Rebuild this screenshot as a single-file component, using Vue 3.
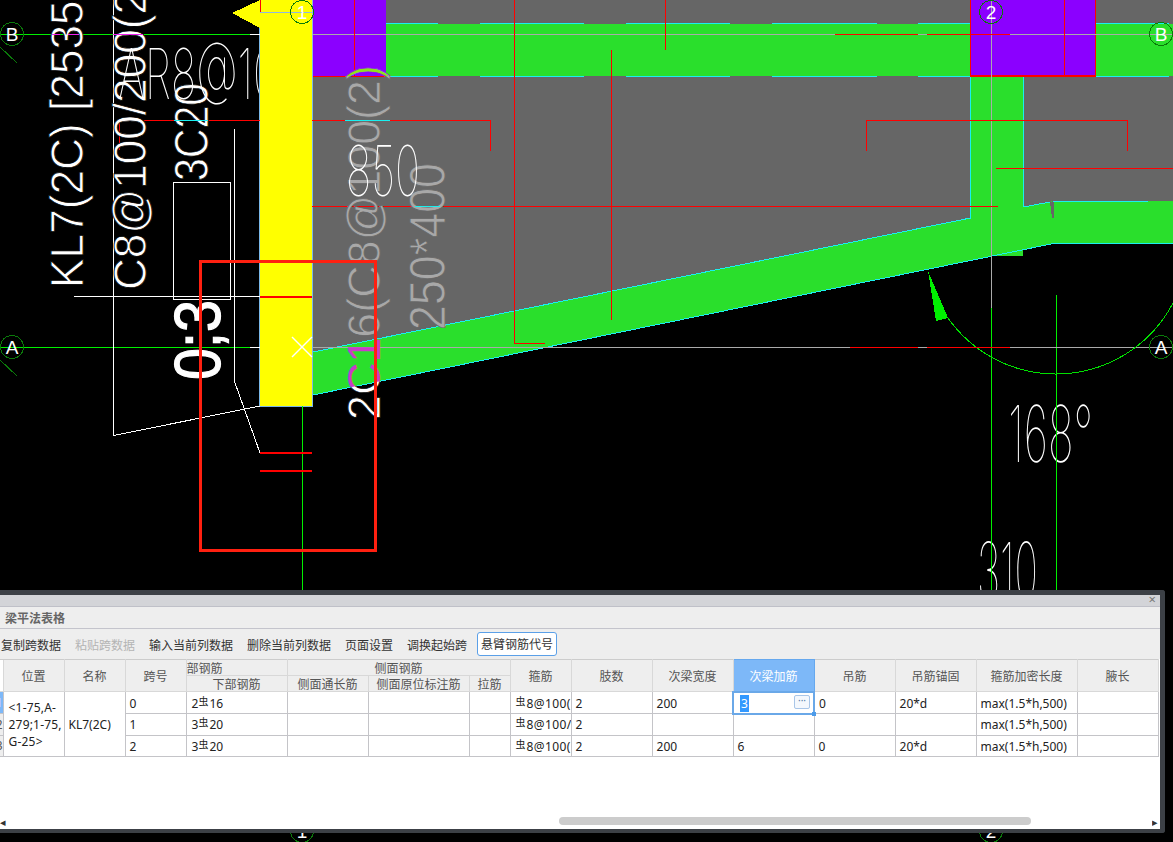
<template>
  <div class="page">
    <svg class="cad" width="1173" height="842" viewBox="0 0 1173 842">
      <defs>
        <clipPath id="on-gray"><polygon points="313,76 970,76 970,218 313,352" /></clipPath>
        <clipPath id="on-green"><polygon points="313,352 970,218 970,300 313,395" /></clipPath>
        <clipPath id="on-black"><polygon points="260,406 313,395 1000,254 1000,600 260,600" /></clipPath>
        <clipPath id="on-top"><rect x="313" y="0" width="90" height="76" /></clipPath>
        <clipPath id="left-of-column"><rect x="0" y="0" width="259" height="590" /></clipPath>
      </defs>

      <!-- slabs and beams -->
      <rect x="386" y="0" width="584" height="24" fill="#666" />
      <rect x="1096" y="0" width="77" height="24" fill="#666" />
      <polygon points="313,76 970,76 970,218 313,352" fill="#666" />
      <polygon points="1023,76 1173,76 1173,201 1053,201 1023,207" fill="#666" />
      <rect x="386" y="24" width="584" height="52" fill="#2adf2c" />
      <rect x="1096" y="24" width="77" height="52" fill="#2adf2c" />
      <polygon points="971,76 1023,76 1023,207 1053,201 1173,201 1173,243 1056,243 1023,250 1023,256 992,256 313,395 313,352 971,218" fill="#2adf2c" />
      <polygon points="1050,202 1054,201 1054,218 1052,218" fill="#666" />

      <!-- cyan edges -->
      <g stroke="#19f0f0" fill="none">
        <path v-for="y in [23.5, 76.5]" :key="y" :d="`M386 ${y}H438M480 ${y}H584M626 ${y}H730M772 ${y}H877M918 ${y}H970M1096 ${y}H1169`" />
        <path d="M970.5 76V218L313 352M1023.5 76V207L1050 202M1053 201H1148M313 395L1056 243H1173M312.5 76V352" />
      </g>

      <text class="stick" transform="translate(1008 462)" font-size="78" textLength="85" lengthAdjust="spacingAndGlyphs">168°</text>
      <text class="stick" transform="translate(977 600)" font-size="80" textLength="61" lengthAdjust="spacingAndGlyphs">310</text>

      <!-- column and purple blocks -->
      <rect x="313" y="0" width="73" height="76" fill="#8b00ff" />
      <rect x="970.5" y="-2" width="125" height="78" fill="#8b00ff" stroke="#f00" stroke-width="1.5" />
      <rect x="259.5" y="-2" width="53" height="408" fill="#ff0" stroke="#7ab8e8" />
      <polygon points="232,13 260,0 260,28" fill="#ff0" />
      <path d="M260 12.5H312M312.5 0V60" stroke="#8fb8e0" fill="none" />

      <!-- axes -->
      <g fill="none">
        <path d="M0 34.5H250M0 347.5H250M302.5 406V590M1056.5 295V590M991.5 308V590" stroke="#00f000" />
        <path d="M250 34.5H260M250 347.5H260" stroke="#fff" />
        <path d="M313 34.5H1173M313 347.5H1173M991.5 0V308" stroke="#aaa" />
        <path d="M948 318A132 132 0 0 0 1173 303" stroke="#00e000" />
        <path d="M0 47L17 63M0 360L17 376" stroke="#0a7a0a" />
      </g>
      <polygon points="928,271 936,321 948,318" fill="#00f000" />

      <!-- red rebar lines -->
      <g stroke="#f00" fill="none">
        <path d="M119.5 150V120.5H260M312 120.5H490.5V151M312 206.5H998" />
        <path d="M260 297H312M260 453H312M260 471H312" stroke-width="2" />
        <path d="M354.5 0V76M313 76.5H386M260.5 0V12M514.5 0V343.5H545M665.5 0V50M611.5 50V320" />
        <path d="M835 34.5H918M927 34.5H1010M850 347.5H918M927 347.5H1010M1064.5 0V76" />
        <path d="M866.5 151V120.5H1127.5V151M996 168.5H1173" />
      </g>

      <!-- white outline -->
      <g stroke="#fff" fill="none">
        <path d="M113.5 0V435.5L260 406M74 296.5H260M234 129V380L260 453" />
        <rect x="173" y="182.5" width="57.5" height="117" />
      </g>
      <g class="cross" stroke="#fff" stroke-width="1.4">
        <line x1="292" y1="337" x2="312" y2="357" />
        <line x1="292" y1="357" x2="312" y2="337" />
      </g>

      <!-- rotated labels -->
      <text class="label" fill="#fff" stroke="#000" transform="translate(83 288) rotate(-90)" font-size="46" textLength="300" lengthAdjust="spacingAndGlyphs">KL7(2C) [2535]</text>
      <text class="label" fill="#fff" stroke="#000" transform="translate(146 290) rotate(-90)" font-size="46" textLength="300" lengthAdjust="spacingAndGlyphs">C8@100/200(2</text>
      <text class="label" fill="#fff" stroke="#000" transform="translate(208 181) rotate(-90)" font-size="48" textLength="98" lengthAdjust="spacingAndGlyphs">3C20</text>
      <text class="heavy" fill="#fff" stroke="#fff" transform="translate(220 380) rotate(-90)" font-size="64" textLength="80" lengthAdjust="spacingAndGlyphs">0;3</text>
      <g v-for="layer in stirrupLayers" :key="layer.clip" :clip-path="`url(#${layer.clip})`">
        <text class="label" :fill="layer.fill" :stroke="layer.edge" transform="translate(380 420) rotate(-90)" font-size="46" textLength="355" lengthAdjust="spacingAndGlyphs">2C16(C8@100(2)</text>
      </g>
      <text class="label" fill="#a8a8a8" stroke="#666" transform="translate(445 330) rotate(-90)" font-size="50" textLength="167" lengthAdjust="spacingAndGlyphs">250*400</text>
      <path d="M52 34.5H60M68 34.5H79M113 34.5H143" stroke="#f020f0" />
      <path d="M174 120.5H208M345 120.5H390M415 206.5H440" stroke="#19f0f0" />

      <!-- thin stick font sits over the wide labels -->
      <g clip-path="url(#left-of-column)">
        <text class="stick" transform="translate(118 99)" font-size="70" textLength="160" lengthAdjust="spacingAndGlyphs">AR8@10</text>
      </g>
      <text class="stick" transform="translate(346 196)" font-size="70" textLength="74" lengthAdjust="spacingAndGlyphs">850</text>

      <!-- selection box -->
      <rect x="200.5" y="261.5" width="175" height="288.5" fill="none" stroke="#ff2010" stroke-width="3" />

      <!-- axis bubbles -->
      <g v-for="b in bubbles" :key="b.label + b.x + b.y">
        <circle :cx="b.x" :cy="b.y" r="11.5" fill="none" stroke="#0a7a0a" />
        <text class="bubble" :x="b.x" :y="b.y + 7" text-anchor="middle">{{ b.label }}</text>
      </g>
    </svg>

    <section class="panel">
      <div class="caption"><span class="close">×</span></div>
      <div class="title">梁平法表格</div>
      <div class="toolbar">
        <span v-for="t in tools" :key="t.text" class="tool" :class="{ off: t.off, on: t.on }">{{ t.text }}</span>
      </div>

      <div class="grid-wrap">
        <table class="grid">
          <colgroup>
            <col v-for="(w, i) in widths" :key="i" :style="{ width: w + 'px' }" />
          </colgroup>
          <thead>
            <tr class="h1">
              <th rowspan="2" class="head-stub"></th>
              <th rowspan="2">位置</th>
              <th rowspan="2">名称</th>
              <th rowspan="2">跨号</th>
              <th class="cut">部钢筋</th>
              <th colspan="3">侧面钢筋</th>
              <th rowspan="2">箍筋</th>
              <th rowspan="2">肢数</th>
              <th rowspan="2">次梁宽度</th>
              <th rowspan="2" class="picked">次梁加筋</th>
              <th rowspan="2">吊筋</th>
              <th rowspan="2">吊筋锚固</th>
              <th rowspan="2">箍筋加密长度</th>
              <th rowspan="2">腋长</th>
            </tr>
            <tr class="h2">
              <th>下部钢筋</th>
              <th>侧面通长筋</th>
              <th>侧面原位标注筋</th>
              <th>拉筋</th>
            </tr>
          </thead>
          <tbody>
            <tr v-for="(r, i) in rows" :key="r.span">
              <td class="stub" :class="{ now: i === 0 }">{{ i + 1 }}</td>
              <td v-if="i === 0" rowspan="3" class="place">&lt;1-75,A-<br />279;1-75,<br />G-25&gt;</td>
              <td v-if="i === 0" rowspan="3">KL7(2C)</td>
              <td>{{ r.span }}</td>
              <td class="bars">{{ r.bars }}<span class="rebar">虫</span>{{ r.size }}</td>
              <td></td>
              <td></td>
              <td></td>
              <td class="clip"><span class="rebar">虫</span>{{ r.stirrup }}</td>
              <td>2</td>
              <td>{{ r.width }}</td>
              <td v-if="i === 0" class="editing">
                <span class="sel">3</span>
                <span class="more">···</span>
                <i class="handle"></i>
              </td>
              <td v-else>{{ r.add }}</td>
              <td>{{ r.hang }}</td>
              <td>{{ r.anchor }}</td>
              <td>max(1.5*h,500)</td>
              <td></td>
            </tr>
          </tbody>
        </table>
      </div>

      <div class="scroller">
        <span class="arrow">◂</span>
        <div class="track"><div class="thumb"></div></div>
        <span class="arrow">▸</span>
      </div>
    </section>
  </div>
</template>

<script setup>
const stirrupLayers = [
  { clip: 'on-gray', fill: '#a8a8a8', edge: '#666' },
  { clip: 'on-green', fill: '#c83cc8', edge: 'none' },
  { clip: 'on-black', fill: '#ffffff', edge: '#000' },
  { clip: 'on-top', fill: '#8ee01f', edge: '#8b00ff' }
]

const bubbles = [
  { label: 'B', x: 12, y: 34 },
  { label: 'B', x: 1161, y: 34 },
  { label: 'A', x: 12, y: 347 },
  { label: 'A', x: 1161, y: 347 },
  { label: '1', x: 302, y: 12 },
  { label: '2', x: 991, y: 12 },
  { label: '1', x: 302, y: 831 },
  { label: '2', x: 991, y: 831 }
]

const tools = [
  { text: '复制跨数据' },
  { text: '粘贴跨数据', off: true },
  { text: '输入当前列数据' },
  { text: '删除当前列数据' },
  { text: '页面设置' },
  { text: '调换起始跨' },
  { text: '悬臂钢筋代号', on: true }
]

const widths = [4, 61, 61, 61, 101, 81, 101, 41, 61, 81, 81, 81, 81, 81, 101, 81]

const rows = [
  { span: 0, bars: 2, size: 16, stirrup: '8@100(', width: 200, add: '3', hang: 0, anchor: '20*d' },
  { span: 1, bars: 3, size: 20, stirrup: '8@100/', width: '', add: '', hang: '', anchor: '' },
  { span: 2, bars: 3, size: 20, stirrup: '8@100(', width: 200, add: '6', hang: 0, anchor: '20*d' }
]
</script>

<style>
html, body { background: #000; overflow: hidden; }
</style>

<style scoped>
.page { position: relative; width: 1173px; height: 842px; overflow: hidden; background: #000; }
.cad { display: block; shape-rendering: crispEdges; }
.label { font-family: "Liberation Sans", sans-serif; stroke-width: 0.8px; }
.heavy { font-family: "Liberation Sans", sans-serif; stroke-width: 1.2px; }
.stick { font-family: Inter, "Liberation Sans", sans-serif; font-weight: 100; fill: #fff; }
.cross { shape-rendering: auto; }
.bubble { font-family: "Liberation Sans", sans-serif; font-size: 19px; fill: #fff; }

.panel {
  position: absolute;
  left: 0;
  top: 590px;
  width: 1160px;
  height: 234px;
  display: flex;
  flex-direction: column;
  background: #fff;
  border: solid #3c4046;
  border-width: 5px 5px 4px 0;
  border-radius: 0 3px 3px 0;
  font-family: "Noto Sans", "Noto Sans CJK SC", sans-serif;
  font-size: 12px;
  color: #222;
}
.caption { height: 11px; flex: none; background: #d3d4d8; border-bottom: 1px solid #bfc0c8; position: relative; }
.close { position: absolute; right: 4px; top: -3px; font-size: 13px; line-height: 14px; color: #777; }
.title {
  height: 21px;
  flex: none;
  padding-left: 5px;
  line-height: 21px;
  background: #eee;
  border-bottom: 1px solid #c4c4cc;
  font-family: "Noto Sans CJK SC", sans-serif;
  font-weight: 700;
  color: #666;
}
.toolbar {
  height: 30px;
  flex: none;
  display: flex;
  align-items: center;
  gap: 14px;
  padding-left: 1px;
  background: #eee;
  font-family: "Noto Sans CJK SC", sans-serif;
  color: #333;
  white-space: nowrap;
}
.tool.off { color: #b4b4b4; }
.tool.on {
  margin-left: -4px;
  padding: 0 3px;
  height: 22px;
  line-height: 21px;
  background: #fff;
  border: 1px solid #5ba0e8;
  border-radius: 3px;
}

.grid-wrap { flex: 1; min-height: 0; overflow: hidden; }
.grid { table-layout: fixed; width: 1159px; margin-left: -1px; border-collapse: collapse; }
.grid th {
  padding: 0;
  background: #eee;
  border: 1px solid #d8d8d8;
  border-top-color: #ccc;
  font-family: "Noto Sans CJK SC", sans-serif;
  font-size: 12px;
  font-weight: 400;
  color: #555;
  white-space: nowrap;
  overflow: hidden;
}
.h1 { height: 16px; }
.h2 { height: 16px; }
.grid .h1 th, .grid .h2 th { line-height: 15px; }
.grid .cut { text-align: left; }
.grid .picked { background: #7db8f8; border-color: #66a8ee; color: #fff; }
.grid .head-stub { border-left: 0; border-right: 0; background: #fff; }
.grid td {
  height: 19px;
  padding: 1px 0 0 4px;
  border: 1px solid #c4c4c8;
  white-space: nowrap;
  overflow: hidden;
  font-size: 12px;
  line-height: 17px;
}
.grid td.stub {
  padding: 0;
  direction: rtl;
  background: #eee;
  border-left: 0;
  color: #555;
  text-align: left;
}
.grid td.now { background: #7db8f8; color: #fff; }
.grid td.place { padding-left: 5px; letter-spacing: 0.2px; white-space: normal; }
.grid td.bars { padding-left: 5px; }
.grid td.clip { padding-left: 5px; letter-spacing: 0.4px; }
.rebar { display: inline-block; margin-right: 1px; font-family: "Noto Sans CJK SC", sans-serif; font-size: 10px; line-height: 10px; vertical-align: 3px; letter-spacing: 0; }
.grid td.editing { position: relative; overflow: visible; border: 2px solid #6aa8e8; padding-left: 6px; }
.sel { background: #3399ff; color: #fff; padding: 0 1px; }
.more {
  position: absolute;
  right: 3px;
  top: 2px;
  width: 14px;
  height: 12px;
  line-height: 9px;
  border: 1px solid #a9c6e8;
  border-radius: 2px;
  background: #f4f8fd;
  color: #5b7fa8;
  text-align: center;
  font-size: 10px;
}
.handle { position: absolute; right: -3px; bottom: -3px; width: 4px; height: 4px; background: #4b9bea; }

.scroller { height: 14px; flex: none; display: flex; align-items: center; padding-bottom: 1px; }
.arrow { width: 8px; flex: none; font-size: 11px; line-height: 11px; color: #333; overflow: hidden; }
.track { flex: 1; }
.thumb { width: 472px; height: 8px; margin-left: 551px; border-radius: 4px; background: #ccc; }
</style>
